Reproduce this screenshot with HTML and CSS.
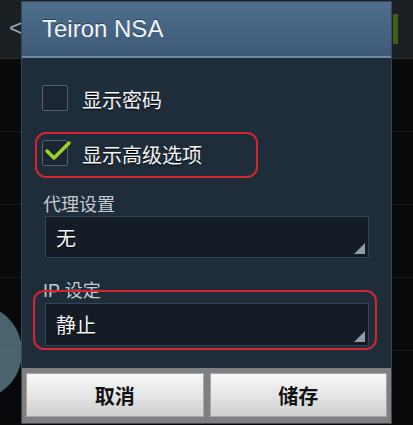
FILE: index.html
```html
<!DOCTYPE html>
<html lang="zh">
<head>
<meta charset="utf-8">
<link rel="stylesheet" href="styles.css">
</head>
<body>
<div class="screen">
  <div class="appbar"><span class="back">&lt;</span><span class="green"></span></div>
  <div class="rows">
    <div class="row"></div><div class="row"></div><div class="row"></div><div class="row"></div>
  </div>
  <div class="circle"></div>

  <div class="dialog">
    <div class="title">Teiron NSA</div>
    <div class="content">
      <div class="check-row">
        <span class="box"></span>
        <span class="check-label">显示密码</span>
      </div>
      <div class="check-row second">
        <span class="box">
          <svg class="tick" width="28" height="22" viewBox="0 0 28 22"><path d="M3 11 L10 18 L25 3" fill="none" stroke="#9ad526" stroke-width="3.5" stroke-linecap="round" stroke-linejoin="round"/></svg>
        </span>
        <span class="check-label">显示高级选项</span>
      </div>
      <div class="field-label">代理设置</div>
      <div class="spinner">无<span class="corner"></span></div>
      <div class="field-label ip">IP 设定</div>
      <div class="spinner second-spinner">静止<span class="corner"></span></div>
      <div class="mark mark-one"></div>
      <div class="mark mark-two"></div>
    </div>
    <div class="buttons">
      <div class="btn">取消</div>
      <div class="btn">储存</div>
    </div>
  </div>
</div>
</body>
</html>
```
FILE: styles.css
```css
html, body {
  margin: 0;
  padding: 0;
  background: #0b0d0f;
}
.screen {
  position: relative;
  width: 413px;
  height: 425px;
  overflow: hidden;
  background: #07090a;
  font-family: "Noto Sans CJK SC", "Noto Sans", sans-serif;
}
.appbar {
  height: 58px;
  background: #1b2024;
  border-bottom: 1px solid #262c31;
  position: relative;
}
.back {
  position: absolute;
  left: 9px;
  top: 14px;
  color: #9aa3aa;
  font-family: "Liberation Sans", sans-serif;
  font-size: 24px;
}
.green {
  position: absolute;
  left: 393px;
  top: 14px;
  width: 5px;
  height: 30px;
  background: #3f5f12;
}
.rows {
  display: flex;
  flex-direction: column;
}
.row {
  height: 72px;
  border-bottom: 1px solid #15181b;
}
.circle {
  position: absolute;
  left: -68px;
  top: 305px;
  width: 90px;
  height: 94px;
  border-radius: 50%;
  background: #5d7b88;
  opacity: 0.8;
}
.dialog {
  position: absolute;
  left: 22px;
  top: 2px;
  width: 369px;
  height: 421px;
  display: flex;
  flex-direction: column;
  background: #1e2a37;
  box-shadow: 0 0 0 1px #3b4754;
}
.title {
  height: 56px;
  box-sizing: border-box;
  padding-left: 20px;
  display: flex;
  align-items: center;
  color: #f2f5f8;
  font-family: "Liberation Sans", sans-serif;
  font-size: 24px;
  background: linear-gradient(#4f6e8e, #3d5a78);
  border-bottom: 2px solid #6c8aa6;
  text-shadow: 0 -1px 0 #2a3d52;
}
.content {
  position: relative;
  flex: 1;
  padding: 27px 22px 0 23px;
  display: flex;
  flex-direction: column;
  background: #1f2c3a;
}
.check-row {
  height: 26px;
  display: flex;
  align-items: center;
  margin-left: -3px;
}
.check-row.second {
  margin-top: 29px;
}
.box {
  position: relative;
  width: 24px;
  height: 24px;
  border: 1px solid #56626e;
  border-radius: 2px;
  background: #1b2632;
  flex: none;
}
.tick {
  position: absolute;
  left: 1px;
  top: -1px;
}
.check-label {
  margin-left: 14px;
  margin-top: 3px;
  color: #f4f6f8;
  font-size: 20px;
  line-height: 26px;
  text-shadow: 0 1px 1px #000;
}
.field-label {
  margin-top: 26px;
  height: 22px;
  line-height: 22px;
  color: #c3cad1;
  font-size: 18px;
  margin-left: -2px;
}
.field-label.ip {
  margin-top: 22px;
  font-family: "Liberation Sans", "Noto Sans CJK SC", sans-serif;
}
.spinner {
  position: relative;
  margin-top: 2px;
  height: 42px;
  box-sizing: border-box;
  border: 1px solid #34434f;
  background: #141d26;
  padding-left: 10px;
  display: flex;
  align-items: center;
  color: #f4f6f8;
  font-size: 20px;
  text-shadow: 0 1px 1px #000;
}
.second-spinner {
  margin-top: 1px;
  height: 43px;
}
.corner {
  position: absolute;
  right: 3px;
  bottom: 3px;
  width: 0;
  height: 0;
  border-left: 11px solid transparent;
  border-bottom: 11px solid #8b9cab;
}
.mark {
  position: absolute;
  border: 2px solid #d42530;
  border-radius: 11px;
}
.mark-one {
  left: 13px;
  top: 74px;
  width: 219px;
  height: 42px;
}
.mark-two {
  left: 11px;
  top: 232px;
  width: 340px;
  height: 56px;
}
.buttons {
  height: 55px;
  box-sizing: border-box;
  padding: 5px 4px 6px;
  display: flex;
  gap: 6px;
  background: #7d7f81;
}
.btn {
  flex: 1;
  display: flex;
  align-items: center;
  justify-content: center;
  border: 1px solid #a4a6a8;
  background: linear-gradient(#f7f7f7, #e4e4e4 55%, #cfcfcf);
  color: #111;
  font-size: 20px;
  font-weight: bold;
}
```
